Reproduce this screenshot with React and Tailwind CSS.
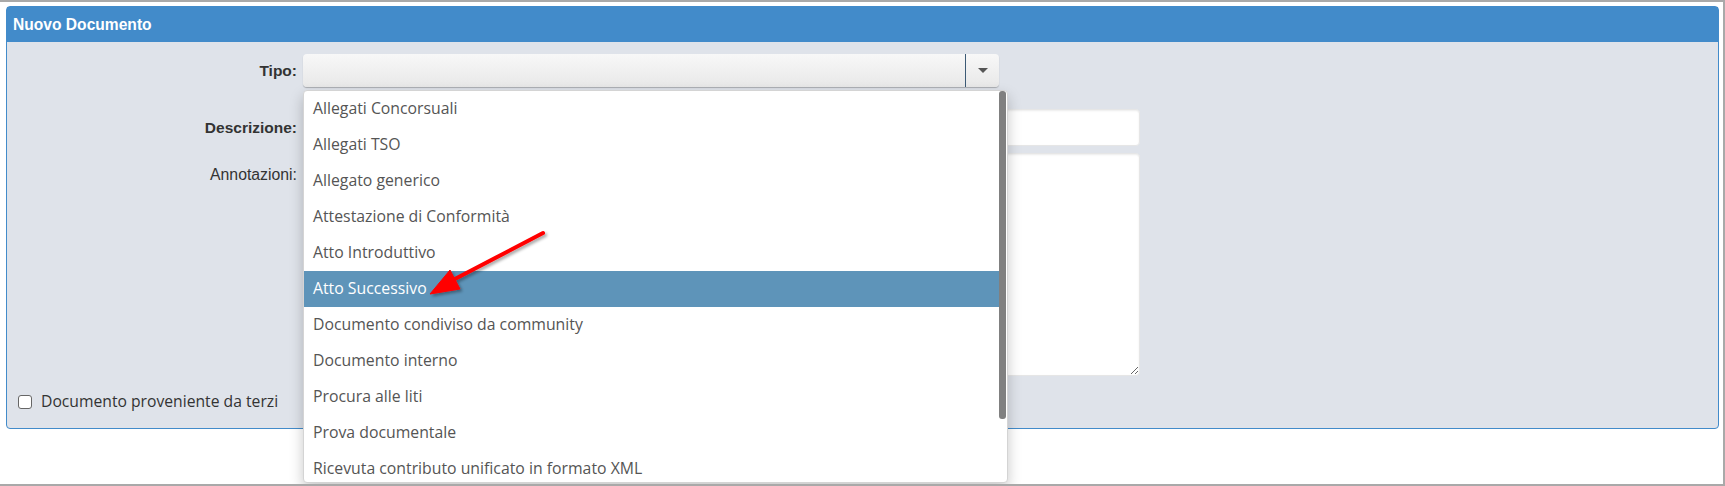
import React from 'react';

const TIPI = [
    'Allegati Concorsuali',
    'Allegati TSO',
    'Allegato generico',
    'Attestazione di Conformità',
    'Atto Introduttivo',
    'Atto Successivo',
    'Documento condiviso da community',
    'Documento interno',
    'Procura alle liti',
    'Prova documentale',
    'Ricevuta contributo unificato in formato XML',
];

const arial = { fontFamily: '"Liberation Sans", Arial, sans-serif' };
const openSans = { fontFamily: '"Open Sans", "Liberation Sans", sans-serif' };

export default function App() {
    const selected = 'Atto Successivo';

    return (
        <div className="relative h-[486px] w-full overflow-hidden bg-white border-t-2 border-r-2 border-b-2 border-[#a9a9a9]" style={arial}>
            <div className="ml-[6px] mr-[4px] mt-[4px] h-[423px] rounded-[4px] border border-[#428bca] bg-[#dfe3ea] flex flex-col">
                <div className="h-[35px] bg-[#428bca] px-[6px] flex items-center text-white font-bold text-[15.6px]">
                    Nuovo Documento
                </div>

                <div className="flex flex-col pt-[12px]">
                    <div className="flex items-center">
                        <label className="w-[290px] text-right text-[15.5px] font-bold text-[#333]">Tipo:</label>
                        <div className="relative ml-[6px] w-[696px] h-[33px] rounded-[4px] bg-gradient-to-b from-[#f8f8f8] to-[#e8e8e8] shadow-[0_1px_1px_rgba(0,0,0,0.25)]">
                            <div className="absolute left-[662px] top-0 h-full w-px bg-[#3c5a75]" />
                            <div className="absolute left-[675px] top-[14px] w-0 h-0 border-l-[5px] border-r-[5px] border-t-[5px] border-l-transparent border-r-transparent border-t-[#555]" />
                        </div>
                    </div>

                    <div className="flex items-center mt-[22px]">
                        <label className="w-[290px] text-right text-[15.5px] font-bold text-[#333]">Descrizione:</label>
                        <input readOnly className="ml-[6px] w-[837px] h-[37px] rounded-[4px] bg-white border border-[#e6e6e6] shadow-[inset_0_1px_2px_rgba(0,0,0,0.08)] outline-none" />
                    </div>

                    <div className="flex items-start mt-[7px]">
                        <label className="w-[290px] pt-[10px] text-right text-[15.8px] text-[#333]">Annotazioni:</label>
                        <textarea readOnly className="ml-[6px] w-[837px] h-[223px] rounded-[4px] bg-white border border-[#e6e6e6] shadow-[inset_0_1px_2px_rgba(0,0,0,0.08)] outline-none" />
                    </div>

                    <div className="flex items-center mt-[16px] h-[20px] pl-[11px]">
                        <span className="w-[14px] h-[14px] rounded-[3px] border border-[#666] bg-white" />
                        <span className="ml-[9px] text-[15.7px] text-[#333]" style={openSans}>Documento proveniente da terzi</span>
                    </div>
                </div>
            </div>

            {/* open select menu */}
            <div className="absolute left-[303px] top-[88px] w-[705px] h-[393px] z-10 flex bg-white border border-[#d4d4d4] rounded-[4px] overflow-hidden shadow-[0_6px_14px_rgba(0,0,0,0.22)]" style={openSans}>
                <ul className="flex-1">
                    {TIPI.map(t => (
                        <li key={t} className={`h-[36px] flex items-center px-[9px] text-[15.8px] ${t === selected ? 'bg-[#5e94b9] text-white' : 'text-[#555]'}`}>
                            {t}
                        </li>
                    ))}
                </ul>
                <div className="w-[8px] pr-px">
                    <div className="h-[328px] w-[7px] rounded-[3px] bg-[#808080]" />
                </div>
            </div>

            {/* red annotation arrow */}
            <svg className="absolute left-[420px] top-[218px] z-20" width="140" height="90" viewBox="0 0 140 90">
                <defs>
                    <filter id="sh" x="-20%" y="-20%" width="140%" height="140%">
                        <feDropShadow dx="2" dy="2" stdDeviation="1.5" floodColor="#000" floodOpacity="0.35" />
                    </filter>
                </defs>
                <g filter="url(#sh)" fill="#ff0000" stroke="#ff0000">
                    <line x1="123" y1="13" x2="33" y2="60" strokeWidth="4" strokeLinecap="round" />
                    <polygon points="10,74 30,50 40,69" strokeWidth="1" strokeLinejoin="round" />
                </g>
            </svg>
        </div>
    );
}
